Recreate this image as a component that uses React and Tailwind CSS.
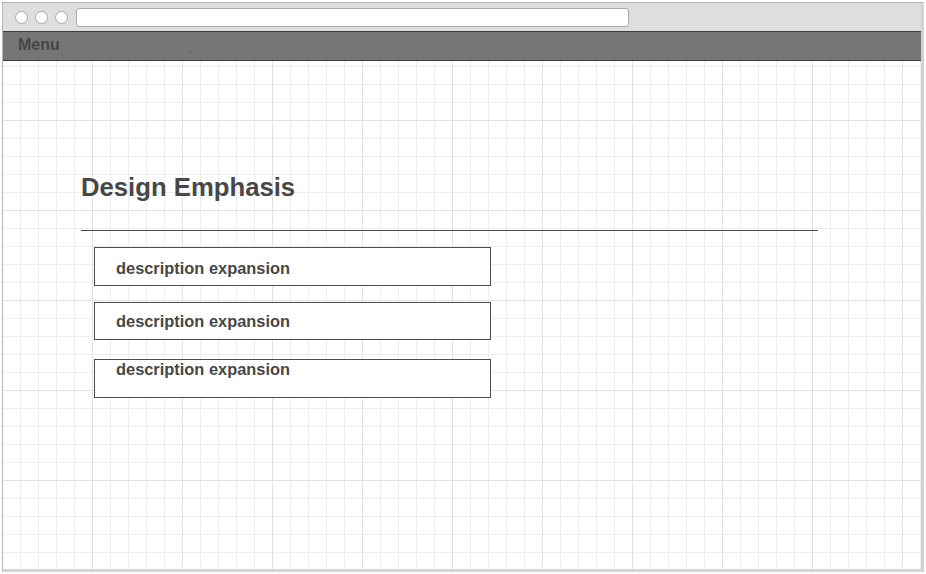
import React from 'react';

const items = [
  { id: 1, box: 'h-[39px] pt-[12px]' },
  { id: 2, box: 'h-[38px] pt-[10px] mt-[16px]' },
  { id: 3, box: 'h-[39px] pt-[1px] mt-[19px]' },
];

const TrafficLight = () => (
  <span className="w-[13px] h-[13px] rounded-full bg-white border border-[#a9a9a9]" />
);

export default function App() {
  return (
    <div className="w-[926px] h-[574px] bg-white pl-[2px] pt-[2px] font-['Liberation_Sans',Arial,sans-serif] overflow-hidden">
      <div className="w-[922px] h-[570px] flex flex-col border border-[#b4b4b4] border-r-[3px] border-b-[3px] border-r-[#d2d2d2] border-b-[#d6d6d6]">
        {/* title bar */}
        <div className="h-[28px] bg-[#dedede] flex items-center pl-[12px] shrink-0">
          <div className="flex gap-[7px] items-center">
            <TrafficLight />
            <TrafficLight />
            <TrafficLight />
          </div>
          <div className="ml-[8px] w-[553px] h-[19px] bg-white border border-[#a9a9a9] rounded-[3px]" />
        </div>

        {/* menu bar */}
        <div className="relative h-[30px] bg-[#767676] border-y border-[#3d3d3d] shrink-0 pl-[15px] pt-[5px]">
          <div className="text-[16px] font-bold leading-none text-[#474747]">Menu</div>
          <span className="absolute left-[187px] top-[20px] w-px h-px bg-[#333]" />
        </div>

        {/* canvas */}
        <div className="flex-1 pl-[78px] pt-[114px] bg-white bg-[linear-gradient(to_right,#e2e2e2_1px,transparent_1px),linear-gradient(to_bottom,#e2e2e2_1px,transparent_1px),linear-gradient(to_right,#eeeeee_1px,transparent_1px),linear-gradient(to_bottom,#eeeeee_1px,transparent_1px)] [background-size:90px_90px,90px_90px,18px_18px,18px_18px] [background-position:89px_59px,89px_59px,17px_5px,17px_5px]">
          <h1 className="text-[25.7px] font-bold leading-none text-[#474747]">Design Emphasis</h1>
          <div className="mt-[29px] w-[737px] h-px bg-[#4a4a4a]" />
          <div className="mt-[16px] ml-[13px] flex flex-col">
            {items.map((it) => (
              <div
                key={it.id}
                className={`w-[397px] bg-white border border-[#4d4d4d] pl-[21px] ${it.box}`}
              >
                <div className="text-[16.4px] font-bold leading-none text-[#474747]">
                  description expansion
                </div>
              </div>
            ))}
          </div>
        </div>
      </div>
    </div>
  );
}
